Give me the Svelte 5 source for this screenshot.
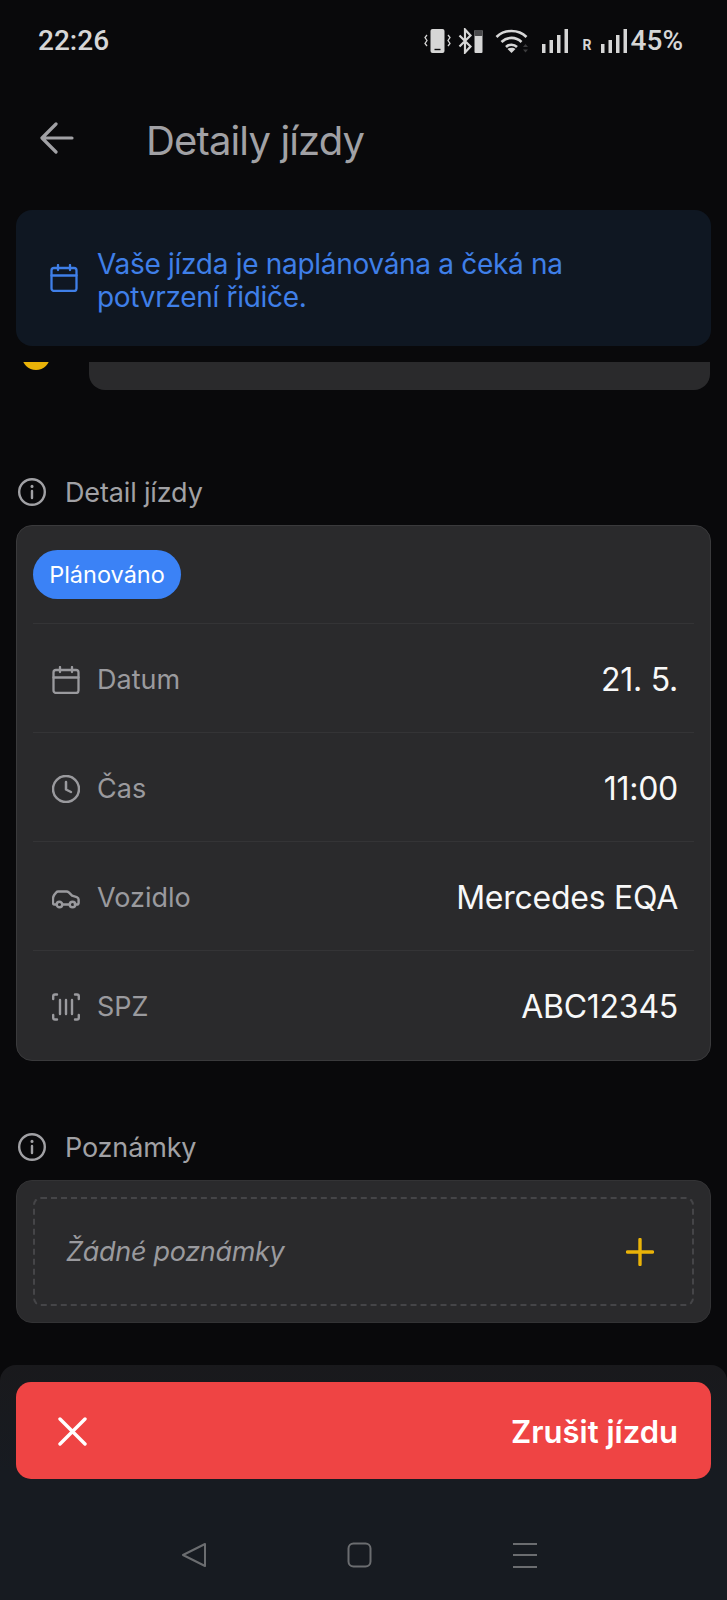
<script>
  const rows = [
    { icon: 'calendar', label: 'Datum', value: '21. 5.' },
    { icon: 'clock', label: 'Čas', value: '11:00' },
    { icon: 'car', label: 'Vozidlo', value: 'Mercedes EQA' },
    { icon: 'plate', label: 'SPZ', value: 'ABC12345' }
  ];
</script>

{#snippet infoIcon()}
  <svg class="section-icon" viewBox="0 0 30 30" fill="none" stroke="currentColor" stroke-width="2.400" stroke-linecap="round">
    <circle cx="15" cy="15" r="12.800" />
    <path d="M15 14v7" />
    <path d="M15 9.200v.2" stroke-width="3" />
  </svg>
{/snippet}

{#snippet calendar()}
  <svg class="row-icon" viewBox="0 0 28 28" fill="none" stroke="currentColor" stroke-width="2.300" stroke-linecap="round" stroke-linejoin="round">
    <rect x="1.500" y="4" width="25" height="23" rx="2.500" />
    <path d="M1.500 11.500h25M8 1v5M20 1v5" />
  </svg>
{/snippet}

<div class="page">
  <div class="status">
    <span class="time">22:26</span>
    <div class="status-icons">
      <svg class="ic-vibrate" width="27" height="26" viewBox="0 0 27 26" fill="none">
        <rect x="6.500" y="1" width="14" height="24" rx="2" fill="#d6d6d6" />
        <path d="M10.500 21.500h6" stroke="#0a0a0c" stroke-width="1.400" />
        <path d="M3 7l-2 2.500 2 3-2 3 2 2.500M24 7l2 2.500-2 3 2 3-2 2.500" stroke="#d6d6d6" stroke-width="1.300" />
      </svg>
      <svg class="ic-bt" width="25" height="26" viewBox="0 0 25 26" fill="none">
        <path d="M1.500 7.500l11 11-5.500 6V1.500l5.500 6-11 11" stroke="#d6d6d6" stroke-width="2.200" />
        <rect x="16.500" y="2" width="8" height="23" rx="1" fill="#d6d6d6" />
        <rect x="16.500" y="2" width="8" height="6" rx="1" fill="#4a4a4c" />
      </svg>
      <svg class="ic-wifi" width="35" height="26" viewBox="0 0 35 26" fill="none">
        <path d="M1.500 9C9.500 1 23.500 1 31.500 9M6.500 14c5.500-5.500 14.500-5.500 20 0M11 19c3-3 8-3 11 0" stroke="#d6d6d6" stroke-width="2.600" />
        <path d="M16.500 25l-4-4c2-1.800 6-1.800 8 0z" fill="#d6d6d6" />
        <path d="M28 19l2.500-3 2.500 3zM28 21.500l2.500 3 2.500-3z" fill="#3c3c3e" />
      </svg>
      <svg class="ic-signal" width="26" height="24" viewBox="0 0 26 24" fill="#d6d6d6">
        <rect x="0" y="15" width="3.500" height="9" />
        <rect x="7.500" y="11" width="3.500" height="13" />
        <rect x="15" y="6" width="3.500" height="18" />
        <rect x="22.500" y="0" width="3.500" height="24" />
      </svg>
      <span class="roaming">R</span>
      <svg class="ic-signal second" width="26" height="24" viewBox="0 0 26 24" fill="#d6d6d6">
        <rect x="0" y="15" width="3.500" height="9" />
        <rect x="7.500" y="11" width="3.500" height="13" />
        <rect x="15" y="6" width="3.500" height="18" />
        <rect x="22.500" y="0" width="3.500" height="24" />
      </svg>
      <span class="battery">45%</span>
    </div>
  </div>

  <header class="topbar">
    <svg class="back" width="34" height="32" viewBox="0 0 34 32" fill="none" stroke="#a1a1a5" stroke-width="3.200" stroke-linecap="round" stroke-linejoin="round">
      <path d="M32 16H3M16 2L2 16l14 14" />
    </svg>
    <h1>Detaily jízdy</h1>
  </header>

  <div class="banner">
    <svg class="banner-icon" viewBox="0 0 28 28" fill="none" stroke="currentColor" stroke-width="2.300" stroke-linecap="round" stroke-linejoin="round">
      <rect x="1.500" y="4" width="25" height="23" rx="2.500" />
      <path d="M1.500 11.500h25M8 1v5M20 1v5" />
    </svg>
    <p>Vaše jízda je naplánována a čeká na<br />potvrzení řidiče.</p>
  </div>

  <div class="stub">
    <span class="dot-clip"><span class="dot"></span></span>
    <div class="stub-card"></div>
  </div>

  <div class="section-title first">
    {@render infoIcon()}
    <span>Detail jízdy</span>
  </div>

  <section class="card">
    <div class="pill-row"><span class="pill">Plánováno</span></div>
    {#each rows as row}
      <div class="row">
        <div class="row-left">
          {#if row.icon === 'calendar'}
            {@render calendar()}
          {:else if row.icon === 'clock'}
            <svg class="row-icon" viewBox="0 0 28 28" fill="none" stroke="currentColor" stroke-width="2.500" stroke-linecap="round" stroke-linejoin="round">
              <circle cx="14" cy="14" r="13" />
              <path d="M14 7v7.500l5 2.500" />
            </svg>
          {:else if row.icon === 'car'}
            <svg class="row-icon" viewBox="0 0 30 28" fill="none" stroke="currentColor" stroke-width="2.600" stroke-linecap="round" stroke-linejoin="round">
              <path d="M5 21H3c-1 0-2-1-2-2v-4c0-1.500.5-3 1.500-4.500L4.500 8c.5-.6 1-1 2-1h9c1 0 1.800.4 2.500 1l3.500 3.500 5 1.500c1 .4 2 1.500 2 2.500V19c0 1-1 2-2 2h-2" />
              <path d="M11 21h8" />
              <circle cx="8" cy="21" r="3" />
              <circle cx="22" cy="21" r="3" />
            </svg>
          {:else}
            <svg class="row-icon" viewBox="0 0 28 28" fill="none" stroke="currentColor" stroke-width="2.400" stroke-linecap="round" stroke-linejoin="round">
              <path d="M5 1.500H3c-1 0-1.800.8-1.800 1.800V6M23 1.500h2c1 0 1.800.8 1.800 1.800V6M5 26.500H3c-1 0-1.800-.8-1.800-1.800V22M23 26.500h2c1 0 1.800-.8 1.800-1.800V22" />
              <path d="M8 7v14M14 7v14M20 7v14" />
            </svg>
          {/if}
          <span class="row-label">{row.label}</span>
        </div>
        <span class="row-value">{row.value}</span>
      </div>
    {/each}
  </section>

  <div class="section-title second">
    {@render infoIcon()}
    <span>Poznámky</span>
  </div>

  <section class="notes">
    <div class="notes-inner">
      <span class="notes-empty">Žádné poznámky</span>
      <svg class="plus" width="28" height="28" viewBox="0 0 28 28" stroke="#eab308" stroke-width="3.400" stroke-linecap="round">
        <path d="M14 1.500v25M1.500 14h25" />
      </svg>
    </div>
  </section>

  <div class="bottom">
    <div class="action-wrap">
      <button class="cancel">
        <svg width="29" height="29" viewBox="0 0 29 29" stroke="#fff" stroke-width="3.400" stroke-linecap="round">
          <path d="M2 2l25 25M27 2L2 27" />
        </svg>
        <span>Zrušit jízdu</span>
      </button>
    </div>
    <nav class="navbar">
      <svg width="26" height="26" viewBox="0 0 26 26" fill="none" stroke="#6b6d70" stroke-width="2" stroke-linejoin="round">
        <path d="M24 2L2 13l22 11z" />
      </svg>
      <svg width="25" height="26" viewBox="0 0 25 26" fill="none" stroke="#6b6d70" stroke-width="2">
        <rect x="1.500" y="1.500" width="22" height="23" rx="5" />
      </svg>
      <svg width="26" height="26" viewBox="0 0 26 26" stroke="#6b6d70" stroke-width="2">
        <path d="M1 2h24M1 13h24M1 25h24" />
      </svg>
    </nav>
  </div>
</div>

<style>
  :global(body) {
    margin: 0;
    background: #09090b;
  }

  .page {
    width: 727px;
    height: 1600px;
    overflow: hidden;
    display: flex;
    flex-direction: column;
    background: #09090b;
    color: #fff;
    font-family: Inter, "Liberation Sans", sans-serif;
  }

  .status {
    height: 80px;
    box-sizing: border-box;
    padding: 0 44px 0 38px;
    display: flex;
    align-items: center;
    justify-content: space-between;
    color: #d6d6d6;
  }

  .time {
    font-family: Roboto, sans-serif;
    font-size: 28px;
    font-weight: 500;
  }

  .status-icons {
    display: flex;
    align-items: center;
    gap: 5px;
    padding-top: 1px;
  }

  .ic-bt { margin-left: 2px; }
  .ic-wifi { margin-left: 7px; }
  .ic-signal { margin-left: 7px; }
  .ic-signal.second { margin-left: 4px; }

  .roaming {
    margin: 8px 0 0 10px;
    font-family: Roboto, sans-serif;
    font-size: 14px;
    font-weight: 700;
  }

  .battery {
    margin-left: -1px;
    font-family: Roboto, sans-serif;
    font-size: 28px;
    font-weight: 500;
  }

  .topbar {
    height: 116px;
    padding-left: 40px;
    display: flex;
    align-items: center;
  }

  h1 {
    margin: 4px 0 0 72px;
    color: #a1a1a5;
    font-size: 40px;
    font-weight: 400;
    letter-spacing: -0.85px;
  }

  .banner {
    margin: 14px 16px 0;
    height: 136px;
    border-radius: 16px;
    background: #0f1722;
    display: flex;
    align-items: center;
    gap: 19px;
    padding-left: 34px;
  }

  .banner-icon {
    width: 28px;
    height: 28px;
    flex: none;
    color: #3f7fe8;
  }

  .banner p {
    margin: 6px 0 0;
    font-size: 28px;
    line-height: 33px;
    letter-spacing: -0.3px;
    color: #3f7fe8;
  }

  .stub {
    margin-top: 16px;
    height: 28px;
    padding: 0 17px 0 22px;
    display: flex;
    gap: 39px;
  }

  .dot-clip {
    width: 28px;
    height: 8px;
    overflow: hidden;
    flex: none;
  }

  .dot {
    display: block;
    width: 28px;
    height: 28px;
    margin-top: -20px;
    border-radius: 50%;
    background: #eab308;
  }

  .stub-card {
    flex: 1;
    background: #2a2a2c;
    border-radius: 0 0 16px 16px;
  }

  .section-title {
    margin-left: 17px;
    display: flex;
    align-items: center;
    gap: 18px;
    color: #a1a1a5;
    font-size: 27px;
    letter-spacing: -0.15px;
    height: 36px;
  }

  .section-title.first { margin-top: 84px; }
  .section-title.second { margin-top: 68px; }

  .section-icon {
    width: 30px;
    height: 30px;
    flex: none;
  }

  .card {
    margin: 15px 16px 0;
    height: 536px;
    box-sizing: border-box;
    border: 1px solid #3a3a3c;
    border-radius: 16px;
    background: #2a2a2c;
    padding: 0 16px;
  }

  .pill-row {
    height: 97px;
    display: flex;
    align-items: center;
  }

  .pill {
    height: 49px;
    width: 148px;
    border-radius: 25px;
    background: #3b82f6;
    display: flex;
    align-items: center;
    justify-content: center;
    font-size: 23.5px;
    font-weight: 400;
  }

  .row {
    height: 109px;
    box-sizing: border-box;
    border-top: 1px solid #343436;
    padding: 3px 16px 0 19px;
    display: flex;
    align-items: center;
    justify-content: space-between;
  }

  .row-left {
    display: flex;
    align-items: center;
    gap: 17px;
    color: #9a9a9e;
    font-size: 27px;
  }

  .row-icon {
    width: 28px;
    height: 28px;
    flex: none;
  }

  .row-value {
    font-size: 32px;
    color: #f8f8f8;
    letter-spacing: -0.25px;
  }

  .notes {
    margin: 15px 16px 0;
    height: 143px;
    box-sizing: border-box;
    border-radius: 16px;
    background: #2a2a2c;
    border: 1px solid #333335;
    padding: 16px;
  }

  .notes-inner {
    height: 100%;
    box-sizing: border-box;
    border: 2px dashed #454548;
    border-radius: 8px;
    padding: 0 38px 0 31px;
    display: flex;
    align-items: center;
    justify-content: space-between;
  }

  .notes-empty {
    font-style: italic;
    font-size: 27px;
    letter-spacing: -0.3px;
    color: #9a9a9e;
  }

  .bottom {
    margin-top: 42px;
    flex: 1;
    display: flex;
    flex-direction: column;
    border-radius: 16px 16px 0 0;
    background: linear-gradient(#19191c, #171b21 45%);
  }

  .action-wrap {
    padding: 17px 16px 0;
  }

  .cancel {
    width: 100%;
    height: 97px;
    border: none;
    border-radius: 15px;
    background: #ef4444;
    color: #fff;
    font: inherit;
    font-size: 31px;
    font-weight: 600;
    padding: 2px 33px 0 42px;
    display: flex;
    align-items: center;
    justify-content: space-between;
  }

  .navbar {
    margin-top: 63px;
    display: flex;
    gap: 140px;
    padding-left: 181px;
  }
</style>
